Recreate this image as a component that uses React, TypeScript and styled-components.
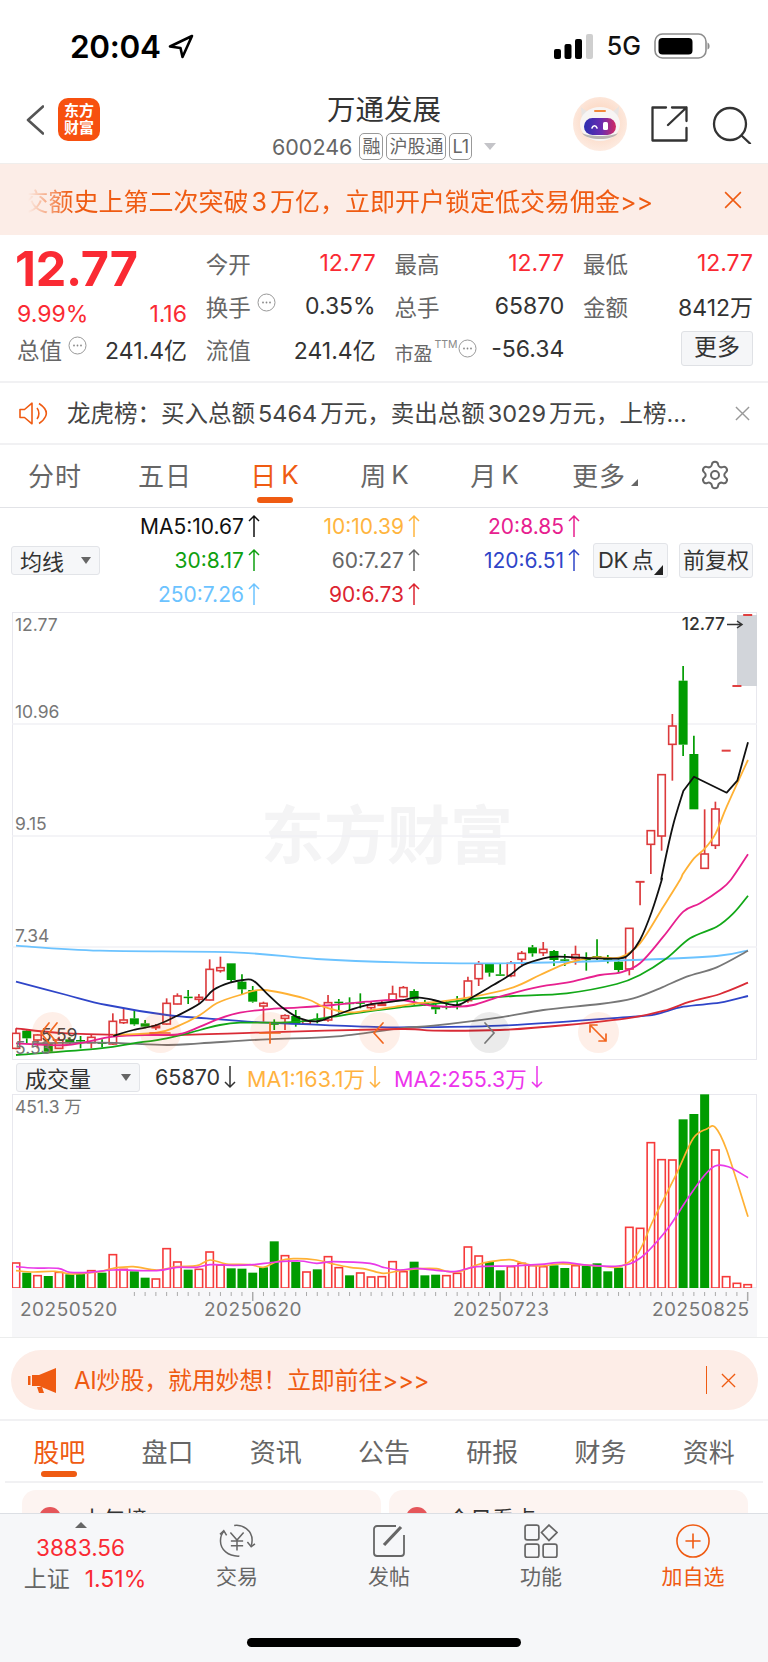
import React, { FC } from 'react';
import styled, { createGlobalStyle } from 'styled-components';
import { Settings } from 'lucide-react';

const ORANGE = '#ef5b12';
const RED = '#fa2a33';
const FONT = `Inter, 'Noto Sans CJK SC', sans-serif`;

const GlobalStyle = createGlobalStyle`
  * {
    box-sizing: border-box;
  }
  html, body {
    margin: 0;
    padding: 0;
    background: #fff;
  }
  body {
    font-family: ${FONT};
    color: #333;
  }
`;

const Page = styled.div`
  width: 768px;
  height: 1662px;
  overflow: hidden;
  display: flex;
  flex-direction: column;
  background: #fff;
`;

/* status bar */
const StatusBar = styled.div`
  height: 92px;
  flex: none;
  display: flex;
  align-items: center;
  justify-content: space-between;
  padding: 0 57px 0 70px;
`;

const StatusGroup = styled.div`
  display: flex;
  align-items: center;
`;

const Clock = styled.span`
  font-size: 31.5px;
  font-weight: 600;
  color: #000;
  letter-spacing: -0.3px;
  margin-right: 7px;
`;

const Network = styled.span`
  font-size: 25px;
  font-weight: 500;
  color: #111;
  margin: 0 13px 0 13px;
`;

/* nav */
const Nav = styled.div`
  height: 71px;
  flex: none;
  display: grid;
  grid-template-columns: 1fr auto 1fr;
  padding: 0 16px;
`;

const NavLeft = styled.div`
  display: flex;
  align-items: center;
  gap: 14px;
  padding: 0 0 16px 10px;
`;

const LogoBox = styled.div`
  width: 42px;
  height: 43px;
  border-radius: 10px;
  background: #f7500f;
  color: #fff;
  font-size: 15px;
  font-weight: 700;
  line-height: 17px;
  text-align: center;
  padding-top: 4px;
`;

const NavCenter = styled.div`
  display: flex;
  flex-direction: column;
  align-items: center;
`;

const Title = styled.div`
  font-size: 28.5px;
  line-height: 36px;
  color: #333;
`;

const SubLine = styled.div`
  display: flex;
  align-items: center;
  gap: 3px;
  margin-top: 5px;
  height: 27px;
  font-size: 21.5px;
  color: #666;
`;

const Code = styled.span`
  margin-right: 4px;
`;

const TagBadge = styled.span`
  height: 27px;
  padding: 0 2px;
  border: 1px solid #999;
  border-radius: 5px;
  font-size: 18px;
  line-height: 25px;
  color: #666;
`;

const Caret = styled.span`
  width: 0;
  height: 0;
  margin-left: 9px;
  border-left: 6px solid transparent;
  border-right: 6px solid transparent;
  border-top: 7px solid #c4c4c8;
`;

const NavRight = styled.div`
  display: flex;
  align-items: flex-start;
  justify-content: flex-end;
  padding-top: 5px;
`;

const NavIcon = styled.svg<{ $ml: number; $mt: number }>`
  margin-left: ${(p) => p.$ml}px;
  margin-top: ${(p) => p.$mt}px;
  flex: none;
`;

/* promo strip */
const PromoBar = styled.div`
  height: 72px;
  flex: none;
  display: flex;
  align-items: center;
  background: #fcede7;
  border-top: 1px solid #f0eeec;
  padding: 0 26px 0 28px;
`;

const PromoMask = styled.div`
  width: 625px;
  display: flex;
  justify-content: flex-end;
  overflow: hidden;
  white-space: nowrap;
  font-size: 25px;
  color: ${ORANGE};
  -webkit-mask-image: linear-gradient(to right, transparent 0, #000 42px);
  mask-image: linear-gradient(to right, transparent 0, #000 42px);
`;

const PromoText = styled.span`
  flex: none;
`;

const InlineNum = styled.span<{ $gap: number }>`
  margin: 0 ${(p) => p.$gap}px;
`;

const CloseButton = styled.svg`
  margin-left: auto;
  flex: none;
`;

/* quote */
const Quote = styled.div`
  height: 148px;
  flex: none;
  display: grid;
  grid-template-columns: repeat(4, 170px);
  grid-template-rows: repeat(3, 43px);
  column-gap: 18.7px;
  padding: 6.5px 0 0 17px;
  border-bottom: 2px solid #f1f1f3;
`;

const Price = styled.div`
  font-size: 48.5px;
  font-weight: 700;
  line-height: 43px;
  letter-spacing: -0.2px;
  color: ${RED};
  margin: 5px 0 0 -2px;
`;

const Stat = styled.div<{ $shift?: number }>`
  display: flex;
  align-items: center;
  justify-content: space-between;
  font-size: 23px;
  white-space: nowrap;
  transform: translateY(${(p) => p.$shift || 0}px);
`;

const StatLabel = styled.span`
  display: flex;
  align-items: flex-start;
  font-size: 22.5px;
  color: #666;
`;

const InfoDot = styled.svg`
  margin: 3px 0 0 6px;
  flex: none;
`;

const SmallLabel = styled(StatLabel)`
  font-size: 19px;
  padding-top: 6px;

  ${InfoDot} {
    margin: 0 0 0 1px;
  }
`;

const Ttm = styled.sup`
  font-size: 10.5px;
  line-height: 12px;
  margin: 0 0 0 2px;
  color: #888;
`;

const StatValue = styled.span<{ $up?: boolean }>`
  color: ${(p) => (p.$up ? RED : '#333')};
`;

const MoreButton = styled.div`
  width: 72px;
  height: 35px;
  justify-self: end;
  margin-top: 3px;
  background: #f5f6f8;
  border: 1px solid #dfe1e5;
  border-radius: 3px;
  text-align: center;
  font-size: 23px;
  line-height: 31px;
  color: #333;
`;

/* notice */
const Notice = styled.div`
  height: 62px;
  flex: none;
  display: flex;
  align-items: center;
  padding: 0 18px 0 19px;
  border-bottom: 2px solid #f1f1f3;
`;

const NoticeText = styled.span`
  margin: 0 0 3px 19px;
  font-size: 23.5px;
  color: #444;
  white-space: nowrap;
`;

/* period tabs */
const Periods = styled.div`
  height: 63px;
  flex: none;
  display: grid;
  grid-template-columns: repeat(7, 110px);
  padding-left: 0;
  border-bottom: 1px solid #e2e3e7;
`;

const PeriodTab = styled.div<{ $active?: boolean }>`
  position: relative;
  display: flex;
  align-items: center;
  justify-content: center;
  height: 62px;
  padding-bottom: 3px;
  font-size: 26px;
  letter-spacing: 1px;
  color: ${(p) => (p.$active ? ORANGE : '#666')};
`;

const KMark = styled.span`
  margin-left: 4px;
`;

const TabBarMark = styled.span`
  position: absolute;
  left: 50%;
  bottom: 4px;
  width: 36px;
  height: 6px;
  margin-left: -18px;
  border-radius: 3px;
  background: ${ORANGE};
`;

const TinyCorner = styled.span`
  width: 0;
  height: 0;
  margin: 16px 0 0 5px;
  border-left: 7px solid transparent;
  border-bottom: 7px solid #666;
`;

/* MA legend */
const MaArea = styled.div`
  height: 104px;
  flex: none;
  display: flex;
  align-items: center;
  padding: 1px 14px 1px 11px;
`;

const SelectBox = styled.div<{ $w: number }>`
  width: ${(p) => p.$w}px;
  height: 29px;
  flex: none;
  display: flex;
  align-items: center;
  justify-content: center;
  gap: ${(p) => (p.$w > 100 ? 30 : 17)}px;
  background: #f6f7f9;
  border: 1px solid #e2e4e8;
  border-radius: 3px;
  font-size: 22px;
  color: #333;
`;

const SelectCaret = styled.span`
  width: 0;
  height: 0;
  border-left: 5px solid transparent;
  border-right: 5px solid transparent;
  border-top: 7px solid #666;
`;

const MaGrid = styled.div`
  width: 480px;
  flex: none;
  display: grid;
  grid-template-columns: repeat(3, 160px);
  grid-auto-rows: 34px;
`;

const MaCell = styled.div<{ $color: string }>`
  display: flex;
  align-items: center;
  justify-content: flex-end;
  gap: 4px;
  font-size: 21px;
  color: ${(p) => p.$color};
`;

const SideButton = styled.div<{ $w: number }>`
  position: relative;
  width: ${(p) => p.$w}px;
  height: 35px;
  flex: none;
  margin-left: ${(p) => (p.$w === 75 ? 13 : 11)}px;
  background: #f6f7f9;
  border: 1px solid #e2e4e8;
  border-radius: 3px;
  text-align: center;
  font-size: 22px;
  line-height: 33px;
  color: #333;
  white-space: nowrap;
`;

const DkText = styled.span`
  display: block;
  padding-left: 4px;
  text-align: left;
  letter-spacing: -0.5px;
`;

const DkChar = styled.span`
  margin-left: 4px;
`;

const ButtonCorner = styled.span`
  position: absolute;
  right: 4px;
  bottom: 2px;
  width: 0;
  height: 0;
  border-left: 9px solid transparent;
  border-bottom: 10px solid #222;
`;

/* charts */
const ChartBox = styled.div<{ $h: number }>`
  position: relative;
  flex: none;
  width: 745px;
  height: ${(p) => p.$h}px;
  margin-left: 12px;
  outline: 1px solid #e8e8ee;
  outline-offset: -1px;
  overflow: hidden;
`;

const ChartSvg = styled.svg`
  position: relative;
  display: block;
`;

const Watermark = styled.span`
  position: absolute;
  left: 249px;
  top: 188px;
  font-size: 63px;
  font-weight: 700;
  line-height: 70px;
  color: #f4f4f5;
  white-space: nowrap;
`;

const AxisLabel = styled.span<{ $y: number; $x?: number; $dark?: boolean }>`
  position: absolute;
  left: ${(p) => p.$x ?? 3}px;
  top: ${(p) => p.$y}px;
  font-size: 17.5px;
  line-height: 22px;
  color: ${(p) => (p.$dark ? '#444' : '#777')};
  white-space: nowrap;
`;

const LastPrice = styled.span`
  position: absolute;
  right: 32px;
  top: 1px;
  font-size: 17.5px;
  font-weight: 500;
  line-height: 22px;
  color: #333;
`;

const ChartControl = styled.div<{ $cx: number; $gray?: boolean }>`
  position: absolute;
  left: ${(p) => p.$cx - 12 - 20.5}px;
  top: 400px;
  width: 41px;
  height: 41px;
  display: flex;
  align-items: center;
  justify-content: center;
  border-radius: 50%;
  background: ${(p) => (p.$gray ? 'rgba(0, 0, 0, 0.08)' : 'rgba(243, 100, 30, 0.1)')};
`;

const VolumeHeader = styled.div`
  height: 34px;
  flex: none;
  display: flex;
  align-items: center;
  padding-left: 16px;
  font-size: 21.5px;
  white-space: nowrap;
`;

const VolumeValue = styled.span<{ $color: string; $ml: number }>`
  display: flex;
  align-items: center;
  gap: 4px;
  margin-left: ${(p) => p.$ml}px;
  color: ${(p) => p.$color};
`;

const DateAxis = styled.div`
  position: relative;
  flex: none;
  width: 745px;
  height: 49px;
  margin-left: 12px;
  background: #f7f7f9;
`;

const DateLabel = styled.span<{ $x: number }>`
  position: absolute;
  left: ${(p) => p.$x - 12}px;
  top: 9px;
  font-size: 19px;
  line-height: 26px;
  letter-spacing: 0.5px;
  color: #777;
`;

/* AI strip */
const AiWrap = styled.div`
  height: 84px;
  flex: none;
  padding: 12px 10px 10px 11px;
  border-top: 1px solid #eceded;
  border-bottom: 2px solid #f1f1f3;
`;

const AiPill = styled.div`
  height: 60px;
  display: flex;
  align-items: center;
  padding: 0 22px 0 17px;
  border-radius: 30px;
  background: #fdede7;
  color: ${ORANGE};
  font-size: 24px;
`;

const AiText = styled.span`
  margin: 0 0 4px 18px;
  letter-spacing: -0.2px;
  white-space: nowrap;
`;

const AiDivider = styled.span`
  width: 1px;
  height: 28px;
  margin-left: auto;
  margin-right: 14px;
  background: ${ORANGE};
`;

/* content tabs */
const ContentTabs = styled.div`
  height: 62px;
  flex: none;
  display: grid;
  grid-template-columns: repeat(7, 1fr);
  margin: 0 5px;
  padding: 0 1px 0 -1px;
  border-bottom: 2px solid #f1f1f3;
`;

const ContentTab = styled.div<{ $active?: boolean }>`
  position: relative;
  display: flex;
  align-items: center;
  justify-content: center;
  font-size: 26px;
  padding-bottom: 1px;
  color: ${(p) => (p.$active ? ORANGE : '#666')};
`;

const CardStrip = styled.div`
  height: 30px;
  flex: none;
  display: flex;
  gap: 8px;
  padding: 7px 0 0 22px;
  overflow: hidden;
`;

const HotCard = styled.div`
  width: 359px;
  height: 60px;
  flex: none;
  display: flex;
  align-items: flex-start;
  gap: 20px;
  padding: 17px 0 0 17px;
  border-radius: 14px;
  background: #fdf4f1;
  font-size: 22px;
  line-height: 24px;
  color: #333;
`;

const HotDot = styled.span`
  width: 22px;
  height: 22px;
  border-radius: 50%;
  background: #e5565a;
`;

/* bottom bar */
const TabBar = styled.div`
  flex: 1;
  display: flex;
  flex-direction: column;
  background: #f6f7f9;
  border-top: 1px solid #dcdfe4;
`;

const TabGrid = styled.div`
  display: grid;
  grid-template-columns: repeat(5, 152px);
  padding: 8px 0 0 9px;
`;

const IndexCell = styled.div`
  display: flex;
  flex-direction: column;
  align-items: center;
`;

const UpTriangle = styled.span`
  width: 0;
  height: 0;
  margin-right: 9px;
  border-left: 6px solid transparent;
  border-right: 6px solid transparent;
  border-bottom: 6px solid #666;
`;

const IndexValue = styled.span`
  margin: 6px 9px 0 0;
  font-size: 22.5px;
  line-height: 28px;
  color: ${RED};
`;

const IndexRow = styled.span`
  display: flex;
  gap: 15px;
  margin-top: 3px;
  font-size: 23px;
  line-height: 28px;
  color: ${RED};
`;

const IndexName = styled.span`
  color: #666;
`;

const ToolItem = styled.div<{ $on?: boolean }>`
  display: flex;
  flex-direction: column;
  align-items: center;
  padding-top: 2px;
  color: ${(p) => (p.$on ? ORANGE : '#666')};
  font-size: 21px;
  line-height: 28px;
`;

const ToolIcon = styled.svg`
  display: block;
  margin-bottom: 5px;
`;

const HomeBar = styled.div`
  width: 274px;
  height: 9px;
  margin: auto auto 15px;
  border-radius: 5px;
  background: #000;
`;

/* ---- chart data, read off the picture (crop coordinates, 3px = 1 page px) ---- */

const X0 = 16;
const STEP = 10.76;
const xAt = (i: number) => X0 + i * STEP;

type Pt = [number, number];
type Candle = [number, number, number, number, number]; // high, top, bottom, low, up

const fromCropA = (pts: Pt[]): Pt[] => pts.map(([x, y]) => [x / 3, 880 + y / 3]);
const fromCropB = (pts: Pt[]): Pt[] => pts.map(([x, y]) => [400 + x / 3, 880 + y / 3]);
const fromCropC = (pts: Pt[]): Pt[] => pts.map(([x, y]) => [560 + x / 3, 610 + y / 3]);

const rawA: Candle[] = [
  [445, 460, 505, 508, 1], [450, 452, 475, 490, 0], [462, 465, 480, 505, 1], [480, 490, 515, 518, 0],
  [470, 480, 505, 507, 1], [472, 478, 490, 495, 0], [468, 480, 484, 505, 0], [462, 472, 488, 505, 1],
  [478, 487, 490, 502, 0], [400, 424, 492, 495, 1], [385, 420, 428, 432, 1], [392, 415, 433, 437, 0],
  [420, 430, 440, 445, 0], [432, 438, 443, 450, 1], [355, 370, 432, 435, 1], [340, 348, 372, 373, 1],
  [330, 350, 352, 372, 0], [342, 352, 358, 368, 1], [238, 268, 360, 361, 1], [230, 263, 272, 278, 1],
  [250, 250, 300, 308, 0], [283, 305, 328, 342, 0], [318, 330, 365, 368, 0], [365, 370, 378, 425, 1],
  [418, 430, 433, 450, 0], [403, 407, 415, 450, 1], [390, 408, 432, 440, 0], [420, 423, 432, 435, 1],
  [400, 416, 418, 430, 0], [345, 368, 420, 425, 1], [357, 365, 368, 398, 0], [352, 368, 372, 390, 0],
  [340, 367, 369, 385, 0], [365, 375, 383, 392, 1], [362, 372, 376, 378, 1], [317, 342, 360, 365, 1],
];

const rawB: Candle[] = [
  [318, 323, 350, 352, 1], [328, 333, 358, 375, 0], [360, 368, 372, 378, 0], [370, 380, 388, 402, 0],
  [362, 378, 382, 388, 0], [348, 375, 377, 388, 0], [290, 303, 362, 368, 1], [243, 252, 296, 318, 1],
  [250, 252, 278, 290, 0], [250, 283, 286, 287, 0], [243, 250, 287, 292, 1], [213, 220, 238, 255, 1],
  [195, 202, 220, 230, 0], [186, 208, 218, 228, 1], [210, 213, 240, 258, 0], [222, 238, 240, 258, 0],
  [197, 224, 236, 254, 1], [217, 236, 238, 272, 0], [178, 228, 232, 240, 0], [225, 235, 237, 250, 0],
  [237, 245, 270, 280, 0], [145, 145, 267, 286, 1], [5, 5, 6, 76, 1],
];

const rawC: Candle[] = [
  [662, 662, 703, 792, 1], [494, 494, 678, 722, 1], [312, 348, 403, 512, 1], [168, 212, 404, 438, 0],
  [377, 432, 598, 598, 0], [598, 732, 775, 775, 1], [575, 597, 706, 717, 1], [422, 422, 422, 422, 1],
  [228, 228, 228, 228, 1], [15, 15, 15, 15, 1],
];

const toPage = (base: number) => (c: Candle): Candle => [
  base + c[0] / 3,
  base + c[1] / 3,
  base + c[2] / 3,
  base + c[3] / 3,
  c[4],
];

const CANDLES: Candle[] = [...rawA.map(toPage(880)), ...rawB.map(toPage(880)), ...rawC.map(toPage(610))];

const MA_LINES: { color: string; pts: Pt[]; tail?: Pt[] }[] = [
  {
    color: '#6cc3ff',
    pts: [
      ...fromCropA([[48, 197], [300, 212], [700, 217], [950, 237], [1200, 247]]),
      ...fromCropB([[300, 250], [700, 240], [950, 228], [1044, 211]]),
    ],
  },
  {
    color: '#2f45c8',
    pts: [
      ...fromCropA([[48, 305], [200, 345], [320, 375], [500, 405], [620, 415], [800, 428], [1100, 440], [1200, 442]]),
      ...fromCropB([[300, 437], [700, 410], [770, 402], [850, 380], [960, 368], [1044, 348]]),
    ],
  },
  {
    color: '#777777',
    pts: [
      ...fromCropA([[100, 490], [300, 488], [500, 495], [600, 490], [800, 478], [1000, 470], [1200, 445]]),
      ...fromCropB([[100, 437], [300, 412], [430, 390], [600, 372], [700, 355], [780, 325], [860, 290], [950, 262], [1044, 212]]),
    ],
  },
  {
    color: '#d92b36',
    pts: [
      ...fromCropA([[48, 445], [200, 460], [500, 465], [800, 457], [1200, 447]]),
      ...fromCropB([[100, 452], [300, 450], [500, 435], [700, 412], [800, 390], [870, 365], [960, 342], [1044, 308]]),
    ],
  },
  {
    color: '#12a818',
    pts: [
      ...fromCropA([[48, 525], [300, 505], [400, 490], [500, 475], [600, 450], [660, 435], [720, 428], [820, 428], [900, 425], [1000, 410], [1100, 395], [1200, 382]]),
      ...fromCropB([[100, 372], [220, 357], [340, 348], [500, 340], [650, 312], [720, 285], [800, 235], [870, 175], [950, 140], [1000, 100], [1044, 47]]),
    ],
  },
  {
    color: '#e7208f',
    pts: [
      ...fromCropA([[48, 490], [200, 495], [340, 470], [470, 465], [540, 462], [600, 440], [660, 415], [720, 398], [800, 388], [900, 382], [1000, 375], [1100, 365], [1200, 360]]),
      ...fromCropB([[100, 378], [170, 380], [220, 375], [300, 350], [420, 320], [500, 308], [600, 285], [660, 278], [720, 250], [790, 170], [850, 95], [900, 70], [960, 30], [992, 0]]),
      ...fromCropC([[564, 733]]),
    ],
  },
  {
    color: '#ffb134',
    pts: [
      ...fromCropA([[340, 465], [470, 458], [530, 440], [600, 405], [650, 370], [720, 345], [790, 330], [920, 357], [970, 380], [1040, 397], [1100, 392], [1200, 378]]),
      ...fromCropB([[50, 370], [120, 365], [220, 350], [340, 322], [420, 285], [500, 250], [580, 232], [660, 232], [720, 190], [790, 80], [840, 0]]),
      ...fromCropC([[370, 790], [402, 745], [435, 715], [467, 670], [500, 590], [564, 450]]),
    ],
  },
  {
    color: '#111111',
    pts: [
      ...fromCropA([[340, 468], [400, 450], [470, 435], [530, 408], [600, 370], [640, 330], [690, 308], [730, 300], [760, 302], [800, 340], [850, 385], [900, 415], [950, 424], [1000, 408], [1050, 390], [1110, 373], [1200, 362]]),
      ...fromCropB([[50, 352], [100, 360], [170, 375], [220, 350], [280, 315], [330, 285], [370, 255], [430, 235], [470, 230], [530, 232], [580, 235], [660, 235], [690, 220], [720, 180], [755, 95], [785, 0]]),
      ...fromCropC([[305, 800], [338, 650], [370, 543]]),
    ],
    tail: fromCropC([[402, 500], [500, 548], [532, 512], [564, 397]]),
  },
];

const VOLUMES: [number, number][] = [
  [609, 1], [638, 0], [647, 1], [648, 0], [637, 1], [643, 0], [640, 0], [632, 1], [638, 0], [584, 1],
  [628, 1], [634, 0], [653, 0], [657, 1], [566, 1], [606, 1], [629, 0], [628, 1], [576, 1], [615, 1],
  [625, 0], [626, 0], [638, 0], [622, 0], [544, 0], [587, 1], [606, 0], [636, 1], [628, 0], [590, 1],
  [623, 1], [646, 0], [639, 1], [651, 1], [650, 1], [605, 1], [635, 1], [605, 0], [646, 0], [644, 0],
  [647, 1], [640, 1], [561, 1], [588, 1], [606, 0], [631, 0], [620, 1], [610, 1], [617, 1], [620, 1],
  [616, 0], [624, 0], [617, 1], [617, 0], [610, 0], [634, 0], [623, 0], [502, 1], [505, 1], [248, 1],
  [299, 1], [300, 1], [178, 0], [162, 0], [103, 0], [270, 1], [650, 1], [670, 1], [674, 1],
];

const volA = (pts: Pt[]): Pt[] => pts.map(([x, y]) => [x / 3, 1060 + y / 3]);
const volB = (pts: Pt[]): Pt[] => pts.map(([x, y]) => [400 + x / 3, 1060 + y / 3]);

const VOL_ORANGE: Pt[] = [
  ...volA([[48, 632], [100, 636], [165, 634], [210, 642], [250, 640], [300, 635], [340, 625], [400, 620], [470, 630], [530, 620], [590, 617], [630, 600], [680, 612], [750, 614], [790, 622], [830, 605], [880, 596], [950, 600], [1000, 612], [1050, 622], [1100, 628], [1150, 640]]),
  ...volB([[0, 632], [60, 626], [110, 626], [140, 634], [180, 634], [230, 615], [270, 605], [330, 599], [370, 610], [420, 618], [480, 612], [540, 614], [600, 618], [660, 620], [715, 578], [760, 480], [830, 340], [880, 235], [920, 207], [946, 202], [980, 270], [1044, 470]]),
];

const VOL_MAGENTA: Pt[] = [
  ...volA([[48, 620], [100, 624], [175, 625], [210, 637], [270, 637], [340, 630], [470, 632], [530, 622], [590, 622], [630, 614], [700, 616], [760, 614], [830, 606], [900, 603], [950, 610], [1000, 605], [1110, 610], [1150, 622]]),
  ...volB([[0, 630], [50, 625], [130, 633], [170, 634], [230, 620], [330, 618], [420, 613], [490, 607], [560, 615], [655, 618], [720, 595], [800, 510], [860, 420], [910, 350], [945, 318], [985, 320], [1044, 353]]),
];

const smoothPath = (pts: Pt[], tail: Pt[] = []) =>
  pts.reduce((d, p, i) => {
    if (i === 0) return `M${p[0].toFixed(1)} ${p[1].toFixed(1)}`;
    const a = pts[i - 2] || pts[i - 1];
    const b = pts[i - 1];
    const c = pts[i + 1] || p;
    const c1x = b[0] + (p[0] - a[0]) / 6;
    const c1y = b[1] + (p[1] - a[1]) / 6;
    const c2x = p[0] - (c[0] - b[0]) / 6;
    const c2y = p[1] - (c[1] - b[1]) / 6;
    return `${d}C${c1x.toFixed(1)} ${c1y.toFixed(1)} ${c2x.toFixed(1)} ${c2y.toFixed(1)} ${p[0].toFixed(1)} ${p[1].toFixed(1)}`;
  }, '') + tail.map((p) => `L${p[0].toFixed(1)} ${p[1].toFixed(1)}`).join('');

/* ---- small drawings ---- */

const TrendArrow: FC<{ down?: boolean }> = ({ down }) => (
  <svg width="12" height="24" viewBox="0 0 12 24" fill="none" stroke="currentColor" strokeWidth="1.5">
    {down ? <path d="M6 1v21M1 17l5 5 5-5" /> : <path d="M6 23V2M1 7l5-5 5 5" />}
  </svg>
);

const Cross: FC<{ size: number; color: string }> = ({ size, color }) => (
  <svg width={size} height={size} viewBox="0 0 16 16" fill="none" stroke={color} strokeWidth="1.4">
    <path d="M1 1l14 14M15 1L1 15" />
  </svg>
);

const InfoMark: FC = () => (
  <InfoDot width="19" height="19" viewBox="0 0 19 19">
    <circle cx="9.5" cy="9.5" r="8.5" fill="none" stroke="#999" strokeWidth="1" />
    <circle cx="6" cy="9.5" r="0.9" fill="#888" />
    <circle cx="9.5" cy="9.5" r="0.9" fill="#888" />
    <circle cx="13" cy="9.5" r="0.9" fill="#888" />
  </InfoDot>
);

const RobotAvatar: FC = () => (
  <svg width="54" height="54" viewBox="0 0 54 54">
    <defs>
      <radialGradient id="peach" cx="50%" cy="45%" r="55%">
        <stop offset="0%" stopColor="#fbcdb2" />
        <stop offset="100%" stopColor="#fdebe1" />
      </radialGradient>
      <linearGradient id="visor" x1="0" y1="0" x2="1" y2="0">
        <stop offset="0%" stopColor="#2a2fb0" />
        <stop offset="55%" stopColor="#6a2cb0" />
        <stop offset="100%" stopColor="#d22a62" />
      </linearGradient>
    </defs>
    <circle cx="27" cy="27" r="27" fill="url(#peach)" />
    <path d="M8 10c3 3 6 4 8 5L9 22zM46 9c-2 3-5 5-8 6l7 7z" fill="#e8e4e2" />
    <ellipse cx="27" cy="27" rx="20" ry="17" fill="#f7f5f4" />
    <path d="M9 36c5 8 31 8 36 0-6 4-30 4-36 0z" fill="#b9b4b2" />
    <rect x="21" y="13" width="12" height="2" rx="1" fill="#f28a3c" />
    <rect x="11" y="21" width="32" height="17" rx="8.5" fill="url(#visor)" />
    <path d="M19 31c1-3 4-3 5 0" fill="none" stroke="#fff" strokeWidth="1.6" strokeLinecap="round" />
    <rect x="30" y="25" width="5" height="8" rx="1.5" fill="#fff" />
  </svg>
);

const SpeakerIcon: FC = () => (
  <svg width="29" height="25" viewBox="0 0 29 25" fill="none" stroke={ORANGE} strokeWidth="1.6" strokeLinejoin="round">
    <path d="M1 8.5h4.500L13 2.200v20.600l-7.500-6.300H1z" />
    <path d="M18 7c2.500 3 2.500 8 0 11M20 2.500c6 4 9 8 6.500 13-1.500 3-3.500 5.500-6.500 7" />
  </svg>
);

const GearIcon: FC = () => <Settings size={32} strokeWidth={1.5} color="#666" />;

const ControlGlyph: FC<{ color?: string; children: React.ReactNode }> = ({ color = '#f2661f', children }) => (
  <svg width="30" height="30" viewBox="0 0 30 30" fill="none" stroke={color} strokeWidth="1.7" strokeLinecap="round">
    {children}
  </svg>
);

const App: FC = () => (
  <Page>
    <GlobalStyle />
    <StatusBar>
      <StatusGroup>
        <Clock>20:04</Clock>
        <svg width="26" height="25" viewBox="0 0 26 25" fill="none" stroke="#000" strokeWidth="2.6" strokeLinejoin="round">
          <path d="M24 2L2 12.500l10.500 1.500 2 9z" />
        </svg>
      </StatusGroup>
      <StatusGroup>
        <svg width="40" height="25" viewBox="0 0 40 25">
          <rect x="0" y="15" width="7" height="10" rx="2" fill="#000" />
          <rect x="10.500" y="10" width="7" height="15" rx="2" fill="#000" />
          <rect x="21" y="5" width="7" height="20" rx="2" fill="#000" />
          <rect x="32" y="0" width="7" height="25" rx="2" fill="#cfcfcf" />
        </svg>
        <Network>5G</Network>
        <svg width="57" height="26" viewBox="0 0 57 26">
          <rect x="1" y="1" width="51" height="24" rx="7.500" fill="none" stroke="#8d8d8d" strokeWidth="1.6" />
          <rect x="4.500" y="5" width="34" height="16.500" rx="4" fill="#000" />
          <path d="M53.500 9.500c2.500.5 3 6.500 0 7z" fill="#8d8d8d" />
        </svg>
      </StatusGroup>
    </StatusBar>

    <Nav>
      <NavLeft>
        <svg width="18" height="30" viewBox="0 0 18 30" fill="none" stroke="#555" strokeWidth="2.6" strokeLinecap="round" strokeLinejoin="round">
          <path d="M17 1.500L2 15l15 13.500" />
        </svg>
        <LogoBox>
          东方
          <br />
          财富
        </LogoBox>
      </NavLeft>
      <NavCenter>
        <Title>万通发展</Title>
        <SubLine>
          <Code>600246</Code>
          <TagBadge>融</TagBadge>
          <TagBadge>沪股通</TagBadge>
          <TagBadge>L1</TagBadge>
          <Caret />
        </SubLine>
      </NavCenter>
      <NavRight>
        <RobotAvatar />
        <NavIcon $ml={24} $mt={9} width="37" height="36" viewBox="0 0 37 36" fill="none" stroke="#333" strokeWidth="2.3" strokeLinecap="round" strokeLinejoin="round">
          <path d="M15 1.500H1.500v33h34V22" />
          <path d="M17 19L35.500 1.500M21 1.500h14.500V15" />
        </NavIcon>
        <NavIcon $ml={24} $mt={9} width="40" height="38" viewBox="0 0 40 38" fill="none" stroke="#333" strokeWidth="2.3" strokeLinecap="round">
          <circle cx="18" cy="18" r="16" />
          <path d="M30 30l8 7.500" />
        </NavIcon>
      </NavRight>
    </Nav>

    <PromoBar>
      <PromoMask>
        <PromoText>
          成交额史上第二次突破<InlineNum $gap={3}>3</InlineNum>万亿，立即开户锁定低交易佣金&gt;&gt;
        </PromoText>
      </PromoMask>
      <CloseButton width="18" height="18" viewBox="0 0 16 16" fill="none" stroke={ORANGE} strokeWidth="1.4">
        <path d="M1 1l14 14M15 1L1 15" />
      </CloseButton>
    </PromoBar>

    <Quote>
      <Price>12.77</Price>
      <Stat>
        <StatLabel>今开</StatLabel>
        <StatValue $up>12.77</StatValue>
      </Stat>
      <Stat>
        <StatLabel>最高</StatLabel>
        <StatValue $up>12.77</StatValue>
      </Stat>
      <Stat>
        <StatLabel>最低</StatLabel>
        <StatValue $up>12.77</StatValue>
      </Stat>
      <Stat $shift={8}>
        <StatValue $up>9.99%</StatValue>
        <StatValue $up>1.16</StatValue>
      </Stat>
      <Stat>
        <StatLabel>
          换手
          <InfoMark />
        </StatLabel>
        <StatValue>0.35%</StatValue>
      </Stat>
      <Stat>
        <StatLabel>总手</StatLabel>
        <StatValue>65870</StatValue>
      </Stat>
      <Stat>
        <StatLabel>金额</StatLabel>
        <StatValue>8412万</StatValue>
      </Stat>
      <Stat>
        <StatLabel>
          总值
          <InfoMark />
        </StatLabel>
        <StatValue>241.4亿</StatValue>
      </Stat>
      <Stat>
        <StatLabel>流值</StatLabel>
        <StatValue>241.4亿</StatValue>
      </Stat>
      <Stat>
        <SmallLabel>
          市盈
          <Ttm>TTM</Ttm>
          <InfoMark />
        </SmallLabel>
        <StatValue>-56.34</StatValue>
      </Stat>
      <MoreButton>更多</MoreButton>
    </Quote>

    <Notice>
      <SpeakerIcon />
      <NoticeText>
        龙虎榜：买入总额<InlineNum $gap={3}>5464</InlineNum>万元，卖出总额<InlineNum $gap={3}>3029</InlineNum>万元，上榜...
      </NoticeText>
      <CloseButton width="15" height="15" viewBox="0 0 16 16" fill="none" stroke="#999" strokeWidth="1.5">
        <path d="M1 1l14 14M15 1L1 15" />
      </CloseButton>
    </Notice>

    <Periods>
      <PeriodTab>分时</PeriodTab>
      <PeriodTab>五日</PeriodTab>
      <PeriodTab $active>
        日<KMark>K</KMark>
        <TabBarMark />
      </PeriodTab>
      <PeriodTab>
        周<KMark>K</KMark>
      </PeriodTab>
      <PeriodTab>
        月<KMark>K</KMark>
      </PeriodTab>
      <PeriodTab>
        更多
        <TinyCorner />
      </PeriodTab>
      <PeriodTab>
        <GearIcon />
      </PeriodTab>
    </Periods>

    <MaArea>
      <SelectBox $w={89}>
        均线
        <SelectCaret />
      </SelectBox>
      <MaGrid>
        <MaCell $color="#111">MA5:10.67<TrendArrow /></MaCell>
        <MaCell $color="#ffb53e">10:10.39<TrendArrow /></MaCell>
        <MaCell $color="#e7208f">20:8.85<TrendArrow /></MaCell>
        <MaCell $color="#0fa010">30:8.17<TrendArrow /></MaCell>
        <MaCell $color="#666">60:7.27<TrendArrow /></MaCell>
        <MaCell $color="#2f45c8">120:6.51<TrendArrow /></MaCell>
        <MaCell $color="#6cc3ff">250:7.26<TrendArrow /></MaCell>
        <MaCell $color="#dc2430">90:6.73<TrendArrow /></MaCell>
      </MaGrid>
      <SideButton $w={75}>
        <DkText>
          DK<DkChar>点</DkChar>
        </DkText>
        <ButtonCorner />
      </SideButton>
      <SideButton $w={74}>前复权</SideButton>
    </MaArea>

    <ChartBox $h={448}>
      <Watermark>东方财富</Watermark>
      <ChartSvg width="745" height="448" viewBox="12 612 745 448">
        {[724, 836, 947].map((y) => (
          <line key={y} x1="12" x2="757" y1={y} y2={y} stroke="#f0f0f5" strokeWidth="1.500" />
        ))}
        <rect x="737" y="615" width="20" height="71" fill="#d2d5da" />
        {CANDLES.map(([high, top, bottom, low, up], i) => {
          const x = xAt(i);
          const color = up ? '#dc3a3c' : '#009c00';
          if (top === bottom) {
            return <rect key={i} x={x - 4.5} y={top - 1} width="9" height="2" fill="#e04040" />;
          }
          return (
            <g key={i}>
              <line x1={x} x2={x} y1={high} y2={top} stroke={color} strokeWidth="1.700" />
              <line x1={x} x2={x} y1={bottom} y2={low} stroke={color} strokeWidth="1.700" />
              {up ? (
                <rect x={x - 3.7} y={top} width="7.400" height={bottom - top} fill="#fff" stroke={color} strokeWidth="1.600" />
              ) : (
                <rect x={x - 4.5} y={top} width="9" height={Math.max(bottom - top, 1.5)} fill={color} />
              )}
            </g>
          );
        })}
        {MA_LINES.map((line) => (
          <path key={line.color} d={smoothPath(line.pts, line.tail)} fill="none" stroke={line.color} strokeWidth="1.800" strokeLinejoin="round" />
        ))}
        <path d="M727 624.500h15M737 621l5 3.500-5 3.500" fill="none" stroke="#333" strokeWidth="1.500" />
      </ChartSvg>
      <AxisLabel $y={2}>12.77</AxisLabel>
      <AxisLabel $y={89}>10.96</AxisLabel>
      <AxisLabel $y={201}>9.15</AxisLabel>
      <AxisLabel $y={313}>7.34</AxisLabel>
      <AxisLabel $y={425}>5.53</AxisLabel>
      <AxisLabel $x={29} $y={412} $dark>5.59</AxisLabel>
      <LastPrice>12.77</LastPrice>
      <ChartControl $cx={52}>
        <ControlGlyph>
          <path d="M12 5L4 15l8 10M20 5l-8 10 8 10" />
        </ControlGlyph>
      </ChartControl>
      <ChartControl $cx={160}>
        <ControlGlyph>
          <path d="M5 15h20" />
        </ControlGlyph>
      </ChartControl>
      <ChartControl $cx={270}>
        <ControlGlyph>
          <path d="M5 15h20M15 5v20" />
        </ControlGlyph>
      </ChartControl>
      <ChartControl $cx={379}>
        <ControlGlyph>
          <path d="M19 5l-9 10 9 10" />
        </ControlGlyph>
      </ChartControl>
      <ChartControl $cx={489} $gray>
        <ControlGlyph color="#777">
          <path d="M11 5l9 10-9 10" />
        </ControlGlyph>
      </ChartControl>
      <ChartControl $cx={598}>
        <ControlGlyph>
          <path d="M7 7l16 16M7 14V7h7M23 16v7h-7" />
        </ControlGlyph>
      </ChartControl>
    </ChartBox>

    <VolumeHeader>
      <SelectBox $w={124}>
        成交量
        <SelectCaret />
      </SelectBox>
      <VolumeValue $color="#333" $ml={15}>
        65870
        <TrendArrow down />
      </VolumeValue>
      <VolumeValue $color="#ffb23f" $ml={11}>
        MA1:163.1万
        <TrendArrow down />
      </VolumeValue>
      <VolumeValue $color="#ec34ec" $ml={13}>
        MA2:255.3万
        <TrendArrow down />
      </VolumeValue>
    </VolumeHeader>

    <ChartBox $h={194}>
      <ChartSvg width="745" height="194" viewBox="12 1094 745 194">
        {VOLUMES.map(([top, up], i) => {
          const x = xAt(i);
          const y = 1060 + top / 3;
          return up ? (
            <rect key={i} x={x - 3.7} y={y} width="7.400" height={1288 - y} fill="#fff" stroke="#f63a3a" strokeWidth="1.600" />
          ) : (
            <rect key={i} x={x - 4.5} y={y} width="9" height={1288.500 - y} fill="#009c00" />
          );
        })}
        <path d={smoothPath(VOL_ORANGE)} fill="none" stroke="#ffb134" strokeWidth="1.700" />
        <path d={smoothPath(VOL_MAGENTA)} fill="none" stroke="#e93ae9" strokeWidth="1.700" />
      </ChartSvg>
      <AxisLabel $y={2}>451.3 万</AxisLabel>
    </ChartBox>

    <DateAxis>
      <svg width="745" height="12" viewBox="12 0 745 12">
        {VOLUMES.map((_, i) =>
          i < 11 ? null : (
            <line key={i} x1={xAt(i)} x2={xAt(i)} y1="0" y2={i === 22 || i === 45 || i === 68 ? 9 : 4} stroke="#aaa" strokeWidth={i === 22 || i === 45 || i === 68 ? 1.5 : 1} />
          )
        )}
      </svg>
      <DateLabel $x={20}>20250520</DateLabel>
      <DateLabel $x={204}>20250620</DateLabel>
      <DateLabel $x={453}>20250723</DateLabel>
      <DateLabel $x={652}>20250825</DateLabel>
    </DateAxis>

    <AiWrap>
      <AiPill>
        <svg width="28" height="25" viewBox="0 0 28 25" fill={ORANGE}>
          <rect x="0" y="8" width="2.500" height="9" />
          <path d="M4 7h7L28 0v25L11 18H4z" />
          <path d="M9 19h5l2 6h-5z" />
        </svg>
        <AiText>AI炒股，就用妙想！立即前往&gt;&gt;&gt;</AiText>
        <AiDivider />
        <Cross size={15} color={ORANGE} />
      </AiPill>
    </AiWrap>

    <ContentTabs>
      <ContentTab $active>
        股吧
        <TabBarMark />
      </ContentTab>
      <ContentTab>盘口</ContentTab>
      <ContentTab>资讯</ContentTab>
      <ContentTab>公告</ContentTab>
      <ContentTab>研报</ContentTab>
      <ContentTab>财务</ContentTab>
      <ContentTab>资料</ContentTab>
    </ContentTabs>

    <CardStrip>
      <HotCard>
        <HotDot />
        十年榜
      </HotCard>
      <HotCard>
        <HotDot />
        今日看点
      </HotCard>
    </CardStrip>

    <TabBar>
      <TabGrid>
        <IndexCell>
          <UpTriangle />
          <IndexValue>3883.56</IndexValue>
          <IndexRow>
            <IndexName>上证</IndexName>
            1.51%
          </IndexRow>
        </IndexCell>
        <ToolItem>
          <ToolIcon width="40" height="34" viewBox="0 0 40 36" fill="none" stroke="#666" strokeWidth="1.600">
            <path d="M17 1.500C26 0 36 7 36 17c0 2-.3 4-1 6M6 8c-3 3-3.500 7-3.500 10 0 9 8 16.500 20 16" />
            <path d="M2 11l4-4 3 5M31 19l4 5 4-3" />
            <path d="M13 9l7 8 7-8M20 17v11M13.500 18h13M13.500 23h13" />
          </ToolIcon>
          交易
        </ToolItem>
        <ToolItem>
          <ToolIcon width="34" height="34" viewBox="0 0 34 34" fill="none" stroke="#666" strokeWidth="1.800">
            <path d="M24 2H5a3 3 0 0 0-3 3v24a3 3 0 0 0 3 3h24a3 3 0 0 0 3-3V11" />
            <path d="M12 21L29 3" strokeWidth="3.200" />
          </ToolIcon>
          发帖
        </ToolItem>
        <ToolItem>
          <ToolIcon width="34" height="34" viewBox="0 0 32 32" fill="none" stroke="#666" strokeWidth="1.600">
            <rect x="1" y="1" width="13" height="14" rx="2" />
            <path d="M23.500 1L31 8l-7.500 7.500L16.500 8z" />
            <rect x="1" y="19" width="13" height="12.500" rx="2" />
            <rect x="18" y="19" width="13" height="12.500" rx="2" />
          </ToolIcon>
          功能
        </ToolItem>
        <ToolItem $on>
          <ToolIcon width="36" height="34" viewBox="0 0 36 36" fill="none" stroke={ORANGE} strokeWidth="1.700">
            <circle cx="18" cy="18" r="17" />
            <path d="M10 18h16M18 10v16" />
          </ToolIcon>
          加自选
        </ToolItem>
      </TabGrid>
      <HomeBar />
    </TabBar>
  </Page>
);

export default App;
